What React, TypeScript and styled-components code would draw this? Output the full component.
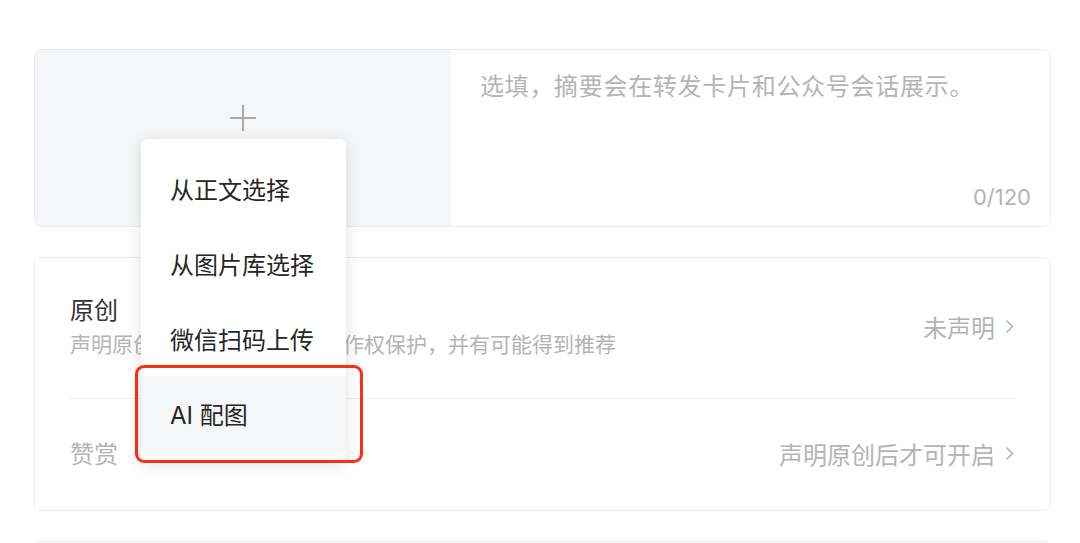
import styled, { createGlobalStyle } from "styled-components";

const GlobalStyle = createGlobalStyle`
  body {
    margin: 0;
    background: #ffffff;
    font-family: "Inter", "Noto Sans CJK SC", sans-serif;
  }
`;

const Page = styled.div`
  padding: 49px 29px 0 34px;
  display: flex;
  flex-direction: column;
  gap: 30px;
  height: 543px;
  box-sizing: border-box;
  overflow: hidden;
`;

const Card = styled.div`
  border: 1px solid #ebebeb;
  border-radius: 7px;
  background: #fff;
  box-sizing: border-box;
  flex-shrink: 0;
`;

const SummaryCard = styled(Card)`
  display: flex;
  height: 178px;
`;

const Cover = styled.div`
  position: relative;
  width: 416px;
  flex-shrink: 0;
  background: #f5f6f8;
  border-radius: 7px 0 0 7px;
  display: flex;
  flex-direction: column;
  align-items: center;
  padding-top: 54px;
  box-sizing: border-box;
  gap: 14px;
`;

const CoverHint = styled.span`
  font-size: 16px;
  color: #b2b2b2;
`;

const Summary = styled.div`
  flex: 1;
  display: flex;
  flex-direction: column;
  justify-content: space-between;
  padding: 21px 19px 14px 29px;
`;

const Placeholder = styled.div`
  font-size: 24px;
  line-height: 32px;
  color: #b4b4b4;
  letter-spacing: 0.7px;
`;

const Counter = styled.div`
  align-self: flex-end;
  font-size: 22px;
  line-height: 30px;
  color: #b4b4b4;
`;

const Menu = styled.div`
  position: absolute;
  left: 106px;
  top: 89px;
  width: 205px;
  padding: 12px 0 10px;
  background: #fff;
  border-radius: 7px;
  box-shadow: 0 3px 16px rgba(0, 0, 0, 0.13);
  z-index: 2;
`;

const MenuItem = styled.div<{ $active?: boolean }>`
  position: relative;
  height: 75px;
  display: flex;
  align-items: center;
  padding-left: 29px;
  font-size: 24px;
  color: #262626;
  background: ${(p) => (p.$active ? "#f5f6f7" : "transparent")};
`;

const Highlight = styled.div`
  position: absolute;
  left: -6px;
  top: -11px;
  width: 228px;
  height: 98px;
  border: 3px solid #fb2d13;
  border-radius: 9px;
  box-sizing: border-box;
  pointer-events: none;
`;

const SettingsCard = styled(Card)`
  padding: 0 35px;
`;

const Row = styled.div<{ $height: number; $divider?: boolean }>`
  height: ${(p) => p.$height}px;
  display: flex;
  align-items: center;
  justify-content: space-between;
  border-bottom: ${(p) => (p.$divider ? "1px solid #ececec" : "none")};
`;

const RowMain = styled.div`
  display: flex;
  flex-direction: column;
  gap: 4px;
`;

const RowTitle = styled.div<{ $muted?: boolean }>`
  font-size: 24px;
  line-height: 30px;
  color: ${(p) => (p.$muted ? "#b4b4b4" : "#333")};
`;

const RowDesc = styled.div`
  font-size: 21px;
  line-height: 30px;
  color: #b4b4b4;
`;

const RowValue = styled.div`
  display: flex;
  align-items: center;
  gap: 10px;
  font-size: 24px;
  color: #b4b4b4;
  margin-top: -3px;
`;

const NextCard = styled(Card)`
  height: 200px;
`;

function Plus() {
  return (
    <svg width="28" height="28" viewBox="0 0 28 28">
      <path d="M14 1v26M1 14h26" stroke="#a9a9a9" strokeWidth="2" />
    </svg>
  );
}

function Chevron() {
  return (
    <svg width="10" height="15" viewBox="0 0 10 15">
      <path d="M1.5 1.5l6 6-6 6" fill="none" stroke="#b4b4b4" strokeWidth="1.6" />
    </svg>
  );
}

const menuItems = ["从正文选择", "从图片库选择", "微信扫码上传", "AI 配图"];

export default function App() {
  return (
    <>
      <GlobalStyle />
      <Page>
        <SummaryCard>
          <Cover>
            <Plus />
            <CoverHint>拖拽或选择封面</CoverHint>
            <Menu>
              {menuItems.map((label, i) => (
                <MenuItem key={label} $active={i === menuItems.length - 1}>
                  {label}
                  {i === menuItems.length - 1 && <Highlight />}
                </MenuItem>
              ))}
            </Menu>
          </Cover>
          <Summary>
            <Placeholder>选填，摘要会在转发卡片和公众号会话展示。</Placeholder>
            <Counter>0/120</Counter>
          </Summary>
        </SummaryCard>
        <SettingsCard>
          <Row $height={140} $divider>
            <RowMain>
              <RowTitle>原创</RowTitle>
              <RowDesc>声明原创后，文章可获更多著作权保护，并有可能得到推荐</RowDesc>
            </RowMain>
            <RowValue>
              未声明
              <Chevron />
            </RowValue>
          </Row>
          <Row $height={111}>
            <RowTitle $muted>赞赏</RowTitle>
            <RowValue>
              声明原创后才可开启
              <Chevron />
            </RowValue>
          </Row>
        </SettingsCard>
        <NextCard />
      </Page>
    </>
  );
}
